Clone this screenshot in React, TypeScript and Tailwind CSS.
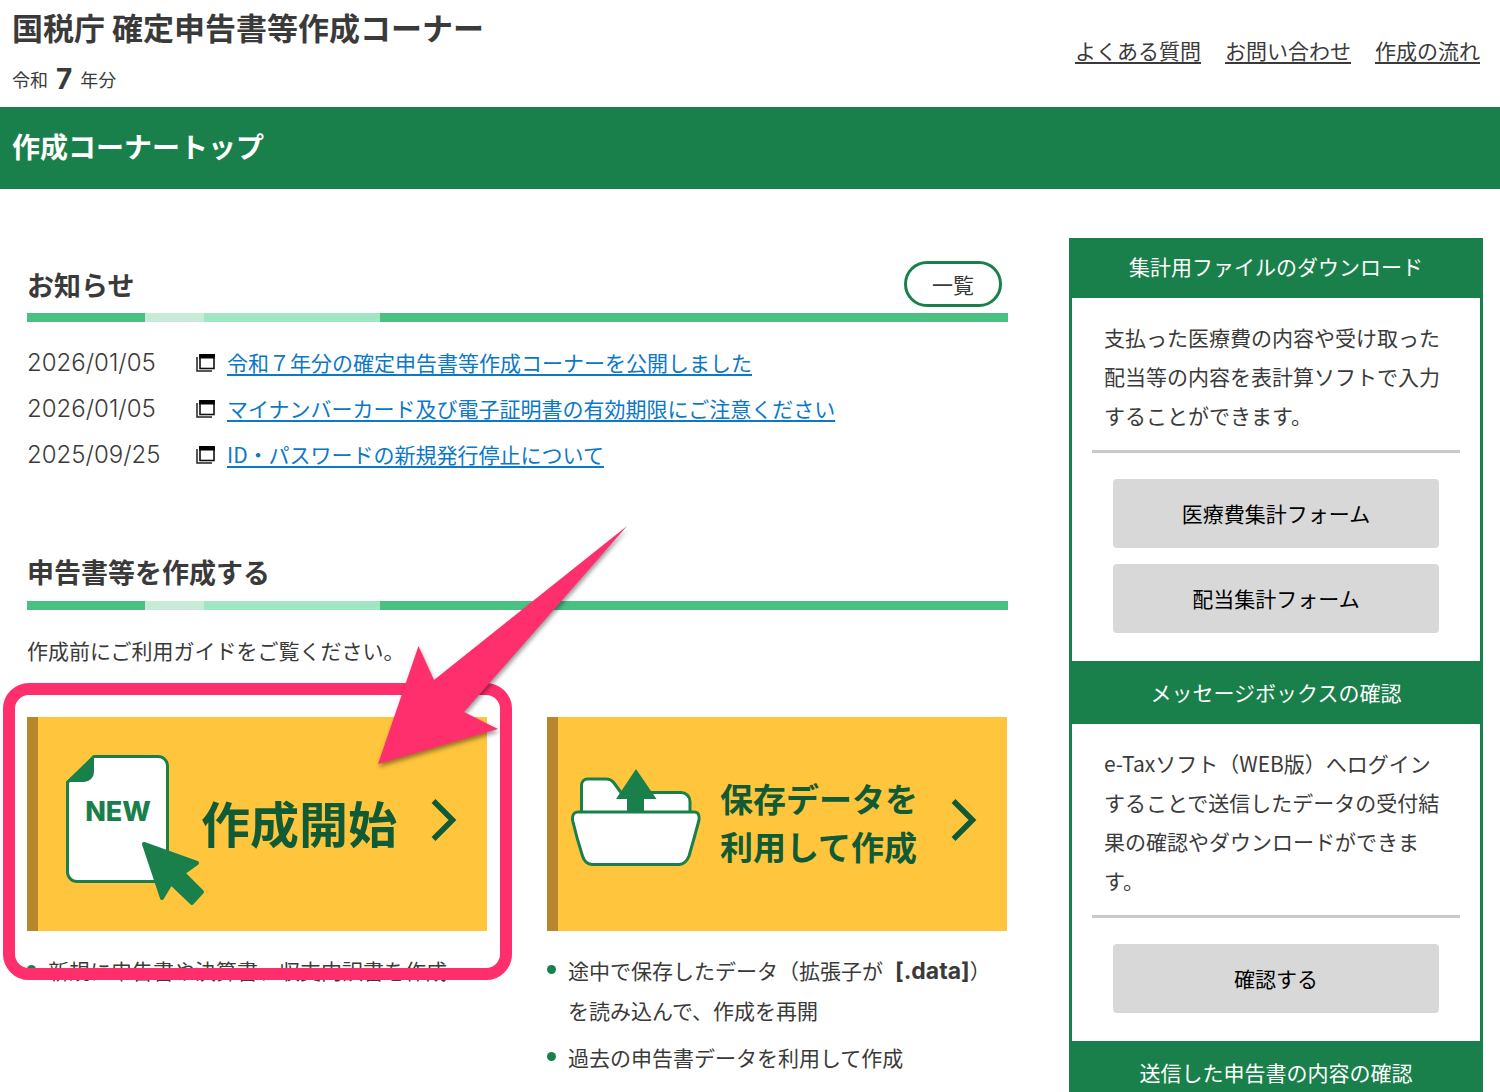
import type { ReactNode } from "react";

interface NewsItem {
  date: string;
  title: string;
}

interface SidePanelProps {
  title: string;
  description?: string;
  actions?: string[];
}

const navLinks = ["よくある質問", "お問い合わせ", "作成の流れ"];

const news: NewsItem[] = [
  { date: "2026/01/05", title: "令和７年分の確定申告書等作成コーナーを公開しました" },
  { date: "2026/01/05", title: "マイナンバーカード及び電子証明書の有効期限にご注意ください" },
  { date: "2025/09/25", title: "ID・パスワードの新規発行停止について" },
];

const panels: SidePanelProps[] = [
  {
    title: "集計用ファイルのダウンロード",
    description: "支払った医療費の内容や受け取った配当等の内容を表計算ソフトで入力することができます。",
    actions: ["医療費集計フォーム", "配当集計フォーム"],
  },
  {
    title: "メッセージボックスの確認",
    description:
      "e-Taxソフト（WEB版）へログインすることで送信したデータの受付結果の確認やダウンロードができます。",
    actions: ["確認する"],
  },
  { title: "送信した申告書の内容の確認" },
];

function WindowIcon() {
  return (
    <svg width="20" height="18" viewBox="0 0 20 18" className="shrink-0" aria-hidden="true">
      <path d="M1 3v14h15" fill="none" stroke="#222" strokeWidth="1.5" />
      <rect x="4" y="1" width="14" height="13.5" fill="#fff" stroke="#111" strokeWidth="1.6" />
      <path d="M3.2 0h15.6v4.5H3.2z" fill="#000" />
    </svg>
  );
}

function NewDocumentIcon() {
  return (
    <svg
      width="136"
      height="164"
      viewBox="0 -12 136 164"
      className="shrink-0 overflow-visible"
      aria-hidden="true"
    >
      <path
        d="M29 2.5H93a9.500 9.500 0 0 1 9.500 9.500V118a9.500 9.500 0 0 1-9.500 9.500H12a9.500 9.500 0 0 1-9.500-9.500V28.500z"
        fill="#fff"
        stroke="#1a804b"
        strokeWidth="3"
      />
      <path d="M29 1.500V18a10 10 0 0 1-10 10H1z" fill="#1a804b" />
      <text
        x="53"
        y="67"
        textAnchor="middle"
        fill="#1a804b"
        fontSize="27"
        className="font-['Inter',sans-serif] font-extrabold"
      >
        NEW
      </text>
      <path
        d="M79 90L132 109L118 119L137 138L127 149L106 129L97 144z"
        fill="#1a804b"
        stroke="#1a804b"
        strokeWidth="4"
        strokeLinejoin="round"
      />
    </svg>
  );
}

function FolderIcon() {
  return (
    <svg width="134" height="112" viewBox="1 0 134 112" className="shrink-0" aria-hidden="true">
      <g fill="#fff" stroke="#1a804b" strokeWidth="3" strokeLinejoin="round">
        <path d="M12.500 46V17a6 6 0 0 1 6-6H37q5 0 8 4l7 9.500h60a9 9 0 0 1 9 9V46z" />
        <path d="M9 44H125q6 0 5 8q-5 19-10 36q-3 8-10 8.500H23q-7-.5-9.500-8.500Q8 71 3.500 52Q3 44 9 44z" />
      </g>
      <path d="M67 1L87.500 31H75V45H58V31H47z" fill="#1a804b" />
    </svg>
  );
}

function ChevronIcon() {
  return (
    <svg width="26" height="50" viewBox="0 0 26 50" className="mr-[30px] ml-auto shrink-0" aria-hidden="true">
      <path d="M2.500 2L21.500 21L2.500 40" fill="none" stroke="#105b35" strokeWidth="5.500" />
    </svg>
  );
}

function SectionBar() {
  return (
    <div className="flex h-[9px] bg-[#4ac082]">
      <span className="w-[12%]" />
      <span className="w-[6%] bg-[#c8ead8]" />
      <span className="w-[18%] bg-[#a1e6c2]" />
    </div>
  );
}

function StartCard({ children, className }: { children: ReactNode; className: string }) {
  return (
    <a
      href="#"
      className={`flex h-[214px] items-center border-l-[11px] border-[#b8862d] bg-[#ffc53d] font-bold text-[#105b35] ${className}`}
    >
      {children}
      <ChevronIcon />
    </a>
  );
}

function Bullet({ children }: { children: ReactNode }) {
  return (
    <li className="flex gap-3">
      <span className="mt-[14px] size-[9px] shrink-0 rounded-full bg-[#1a804b]" />
      <span>{children}</span>
    </li>
  );
}

function SidePanel({ title, description, actions }: SidePanelProps) {
  return (
    <section className="group">
      <h2 className="bg-[#1a804b] pt-4 pb-4 text-center leading-[31px] text-white group-first:pt-[13px]">
        {title}
      </h2>
      {description && (
        <div className="px-5 pt-5 pb-7">
          <p className="px-3 leading-[39px]">{description}</p>
          <hr className="mt-[15px] mb-[26px] border-t-[3px] border-[#c9c9c9]" />
          <div className="flex flex-col gap-4 px-[21px]">
            {actions?.map((action) => (
              <button key={action} type="button" className="h-[69px] rounded-sm bg-[#d8d8d8] text-black">
                {action}
              </button>
            ))}
          </div>
        </div>
      )}
    </section>
  );
}

export default function App() {
  return (
    <div
      lang="ja"
      className="min-h-screen bg-white font-['Noto_Sans_CJK_JP',sans-serif] text-[21px] leading-[39px] text-[#3a3a3a]"
    >
      <header className="flex items-start justify-between pr-5 pl-3">
        <div className="pt-[3px]">
          <h1 className="text-[31px] leading-[48px] font-bold">国税庁 確定申告書等作成コーナー</h1>
          <p className="flex h-14 items-center gap-2 text-[18px]">
            令和
            <b className="font-['Inter',sans-serif] text-[28px]">7</b>
            年分
          </p>
        </div>
        <nav className="flex gap-6 pt-[31px]">
          {navLinks.map((label) => (
            <a key={label} href="#" className="underline underline-offset-3">
              {label}
            </a>
          ))}
        </nav>
      </header>

      <div className="bg-[#1a804b] px-3 pt-[18px] pb-[22px]">
        <h2 className="text-[28px] leading-[42px] font-bold text-white">作成コーナートップ</h2>
      </div>

      <div className="flex items-start gap-[61px] pt-[49px] pr-[17px] pl-[27px]">
        <main className="min-w-0 flex-1">
          <section className="pt-[23px]">
            <div className="mb-[6px] flex items-center justify-between pr-[6px]">
              <h2 className="text-[27px] font-bold">お知らせ</h2>
              <button
                type="button"
                className="flex h-[46px] w-[98px] items-center justify-center rounded-full border-[3px] border-[#1a804b]"
              >
                一覧
              </button>
            </div>
            <SectionBar />
            <ul className="mt-[21px] flex flex-col gap-[7px]">
              {news.map((item) => (
                <li key={item.title} className="flex items-center">
                  <time className="w-[169px] font-['Inter',sans-serif] text-[24px] font-light">{item.date}</time>
                  <WindowIcon />
                  <a href="#" className="ml-[11px] text-[#0b78c8] underline underline-offset-3">
                    {item.title}
                  </a>
                </li>
              ))}
            </ul>
          </section>

          <section className="pt-[78px]">
            <h2 className="mb-[10px] text-[27px] font-bold">申告書等を作成する</h2>
            <SectionBar />
            <p className="mt-[21px]">作成前にご利用ガイドをご覧ください。</p>

            <div className="mt-[47px] grid grid-cols-2 gap-[60px] pr-px">
              <div>
                <div className="relative">
                  <StartCard className="pl-[27px]">
                    <NewDocumentIcon />
                    <span className="pb-1 text-[49px] leading-[60px] whitespace-nowrap">作成開始</span>
                  </StartCard>
                  <div className="pointer-events-none absolute -top-[34px] -right-[25px] -bottom-[49px] -left-[24px] rounded-[26px] border-[12px] border-[#ff2e6d]" />
                  <svg
                    width="260"
                    height="256"
                    viewBox="0 0 260 256"
                    className="pointer-events-none absolute -top-[197px] left-[345px] drop-shadow-[1px_3px_2px_rgba(0,0,0,0.4)]"
                    aria-hidden="true"
                  >
                    <path d="M6 244L46.500 126L62 160L255 6L92 192L126 209z" fill="#ff2e6d" />
                  </svg>
                </div>
                <ul className="mt-5">
                  <Bullet>新規に申告書や決算書、収支内訳書を作成</Bullet>
                </ul>
              </div>
              <div>
                <StartCard className="pl-3">
                  <FolderIcon />
                  <span className="ml-4 pb-1 text-[33px] leading-[48px] whitespace-nowrap">
                    保存データを
                    <br />
                    利用して作成
                  </span>
                </StartCard>
                <ul className="mt-5 flex flex-col gap-2">
                  <Bullet>
                    途中で保存したデータ（拡張子が
                    <b className="ml-3 font-['Inter',sans-serif] text-[23px]">[.data]</b>）
                    <br />
                    を読み込んで、作成を再開
                  </Bullet>
                  <Bullet>過去の申告書データを利用して作成</Bullet>
                </ul>
              </div>
            </div>
          </section>
        </main>

        <aside className="w-[414px] shrink-0 border-x-[3px] border-[#1a804b]">
          {panels.map((panel) => (
            <SidePanel key={panel.title} {...panel} />
          ))}
        </aside>
      </div>
    </div>
  );
}
